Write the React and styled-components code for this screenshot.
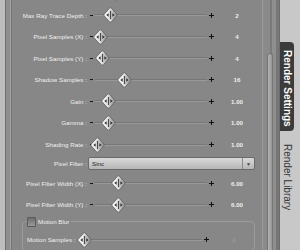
import React from 'react';
import styled, { createGlobalStyle } from 'styled-components';

const GlobalStyle = createGlobalStyle`
  html, body {
    margin: 0;
    padding: 0;
    width: 300px;
    height: 250px;
    overflow: hidden;
    background: #878787;
  }
  body {
    font-family: "Liberation Sans", Arial, sans-serif;
  }
`;

const Page = styled.div`
  display: flex;
  width: 300px;
  height: 250px;
  overflow: hidden;
  background: #878787;
`;

const LeftFrame = styled.div`
  width: 12px;
  flex: none;
  background: linear-gradient(
    to right,
    #bdbdbd 0, #bdbdbd 5px,
    #6f6f6f 5px, #6f6f6f 6px,
    #8e8e8e 6px, #8e8e8e 10px,
    #a0a0a0 10px, #a0a0a0 11px,
    #767676 11px, #767676 12px
  );
`;

const Content = styled.div`
  flex: 1;
  min-width: 0;
  overflow: hidden;
`;

const List = styled.div`
  display: flex;
  flex-direction: column;
  margin-top: -17.4px;
`;

const Row = styled.div`
  display: grid;
  grid-template-columns: 75px 127px 38px;
  column-gap: 2px;
  align-items: center;
  height: ${p => p.$h || 21.6}px;
`;

const Label = styled.div`
  text-align: ${p => (p.$left ? 'left' : 'right')};
  white-space: nowrap;
  font-size: 6.2px;
  color: #f1f1f1;
  letter-spacing: 0.05px;
`;

const Value = styled.div`
  text-align: center;
  font-size: 6.2px;
  font-weight: bold;
  color: ${p => (p.$dim ? '#9a9a9a' : '#eeeeee')};
`;

const SliderArea = styled.div`
  position: relative;
  height: 16px;
  display: flex;
  align-items: center;
`;

const Dash = styled.span`
  width: 3px;
  height: 1px;
  margin: 0 2px 0 1px;
  background: ${p => (p.$hidden ? 'transparent' : '#161616')};
  flex: none;
`;

const Track = styled.span`
  flex: 1;
  height: 0;
  margin-right: 2px;
  border-top: 1px solid #777777;
  border-bottom: 1px solid #999999;
`;

const Plus = styled.span`
  position: relative;
  width: 5px;
  height: 5px;
  margin-right: 2px;
  flex: none;
  &::before, &::after {
    content: '';
    position: absolute;
    background: #111;
  }
  &::before { left: 0; top: 2px; width: 5px; height: 1px; }
  &::after { left: 2px; top: 0; width: 1px; height: 5px; }
`;

const ThumbSvg = styled.svg`
  position: absolute;
  top: 0;
  width: 15px;
  height: 16px;
`;

const Thumb = ({ at }) => (
  <ThumbSvg viewBox="0 0 15 16" style={{ left: at - 7.5 }}>
    <defs>
      <linearGradient id="thumbFill" x1="0" y1="0" x2="1" y2="0">
        <stop offset="0" stopColor="#ffffff" />
        <stop offset="0.45" stopColor="#e2e2e2" />
        <stop offset="0.6" stopColor="#c4c4c4" />
        <stop offset="1" stopColor="#8e8e8e" />
      </linearGradient>
    </defs>
    <path
      d="M7.5 0.8 Q8.2 0.8 8.8 1.6 L13.8 7.2 Q14.4 8 13.8 8.8 L8.8 14.4 Q8.2 15.2 7.5 15.2 Q6.8 15.2 6.2 14.4 L1.2 8.8 Q0.6 8 1.2 7.2 L6.2 1.6 Q6.8 0.8 7.5 0.8 Z"
      fill="url(#thumbFill)"
      stroke="#5e5e5e"
      strokeWidth="0.8"
    />
    <rect x="6.9" y="4" width="1.2" height="8" fill="#4a4a4a" />
    <polygon points="5.6,6.2 3.4,8 5.6,9.8" fill="#2e2e2e" />
    <polygon points="9.4,6.2 11.6,8 9.4,9.8" fill="#2e2e2e" />
  </ThumbSvg>
);

const Slider = ({ at, noDash }) => (
  <SliderArea>
    <Dash $hidden={noDash} />
    <Track />
    <Plus />
    <Thumb at={at} />
  </SliderArea>
);

const Select = styled.div`
  grid-column: 2 / span 2;
  margin: 0 1px 0 -1px;
  height: 13px;
  box-sizing: border-box;
  display: flex;
  align-items: center;
  border: 1px solid #6a6a6a;
  border-radius: 2px;
  background: linear-gradient(to bottom, #dadada, #b6b6b6);
  font-size: 6.2px;
  color: #1e1e1e;
`;

const SelectText = styled.span`
  flex: 1;
  padding-left: 3px;
`;

const SelectArrow = styled.span`
  width: 11px;
  height: 100%;
  border-left: 1px solid #8a8a8a;
  display: flex;
  align-items: center;
  justify-content: center;
  font-size: 5px;
  color: #444;
`;

const Group = styled.fieldset`
  margin: 1px 7px 0 10px;
  padding: 2px 0 0 4px;
  border: 1px solid #9b9b9b;
  border-radius: 4px;
  min-width: 0;
`;

const Legend = styled.legend`
  padding: 0 2px 0 0;
  display: flex;
  align-items: center;
  gap: 2px;
  font-size: 6.2px;
  color: #f1f1f1;
`;

const CheckBox = styled.span`
  width: 9px;
  height: 10px;
  box-sizing: border-box;
  border: 1px solid #5a5a5a;
  border-radius: 1px;
  background: linear-gradient(to bottom, #6e6e6e, #9a9a9a);
`;

const GroupRow = styled(Row)`
  grid-template-columns: 46px 136px 42px;
`;

const Scrollbar = styled.div`
  width: 17px;
  flex: none;
  box-sizing: border-box;
  display: flex;
  background: linear-gradient(
    to right,
    #9b9b9b 0, #9b9b9b 1px,
    #8a8a8a 1px, #8a8a8a 8px,
    #7a7a7a 8px, #7a7a7a 10px,
    #8f8f8f 10px, #8f8f8f 14px,
    #777777 14px, #777777 17px
  );
`;

const ScrollThumb = styled.div`
  width: 6px;
  margin: 53px 0 0 5px;
  box-sizing: border-box;
  border: 1px solid #767676;
  border-bottom: none;
  border-radius: 3px 3px 0 0;
  background: linear-gradient(to right, #b4b4b4, #979797);
`;

const TabStrip = styled.div`
  width: 21px;
  flex: none;
  box-sizing: border-box;
  background: #c8c8c8;
  border-left: 1px solid #6c6c6c;
  display: flex;
  flex-direction: column;
  padding-top: 42px;
`;

const Tab = styled.div`
  width: 14px;
  box-sizing: border-box;
  writing-mode: vertical-rl;
  font-size: 10px;
  line-height: 14px;
  white-space: nowrap;
  ${p =>
    p.$active
      ? `
    background: #3b3b3b;
    color: #ffffff;
    font-weight: bold;
    border-radius: 0 4px 4px 0;
    padding: 8px 0 4px;
  `
      : `
    color: #333333;
    padding: 13px 0 4px;
  `}
`;

const sliders = [
  { id: 'prev', label: '', value: '', at: 26 },
  { id: 'depth', label: 'Max Ray Trace Depth', value: '2', at: 21 },
  { id: 'psx', label: 'Pixel Samples (X)', value: '4', at: 11 },
  { id: 'psy', label: 'Pixel Samples (Y)', value: '4', at: 13 },
  { id: 'shadow', label: 'Shadow Samples', value: '16', at: 35 },
  { id: 'gain', label: 'Gain', value: '1.00', at: 19 },
  { id: 'gamma', label: 'Gamma', value: '1.00', at: 19 },
  { id: 'rate', label: 'Shading Rate', value: '1.00', at: 8 },
];

const widths = [
  { id: 'pfx', label: 'Pixel Filter Width (X)', value: '6.00', at: 29 },
  { id: 'pfy', label: 'Pixel Filter Width (Y)', value: '6.00', at: 29 },
];

const SliderRow = ({ label, value, at }) => (
  <Row>
    <Label>{label ? `${label} :` : ''}</Label>
    <Slider at={at} />
    <Value>{value}</Value>
  </Row>
);

export default function App() {
  return (
    <Page>
      <GlobalStyle />
      <LeftFrame />
      <Content>
        <List>
          {sliders.map(s => <SliderRow key={s.id} {...s} />)}
          <Row $h={17.2}>
            <Label>Pixel Filter :</Label>
            <Select>
              <SelectText>Sinc</SelectText>
              <SelectArrow>▼</SelectArrow>
            </Select>
          </Row>
          {widths.map(s => <SliderRow key={s.id} {...s} />)}
          <Group>
            <Legend>
              <CheckBox />
              Motion Blur
            </Legend>
            <GroupRow>
              <Label $left>Motion Samples :</Label>
              <Slider at={9} noDash />
              <Value $dim>2</Value>
            </GroupRow>
          </Group>
        </List>
      </Content>
      <Scrollbar>
        <ScrollThumb />
      </Scrollbar>
      <TabStrip>
        <Tab $active>Render Settings</Tab>
        <Tab>Render Library</Tab>
      </TabStrip>
    </Page>
  );
}
